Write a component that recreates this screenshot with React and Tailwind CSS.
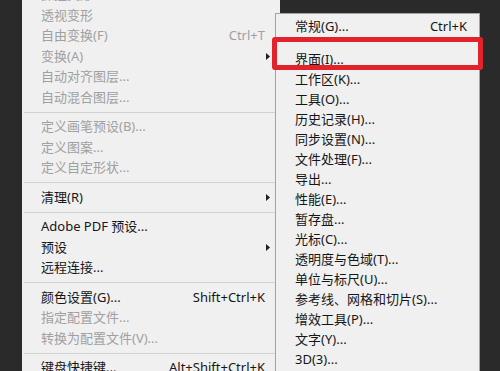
import React from 'react';

const FONT = { fontFamily: '"Noto Sans", "Noto Sans CJK SC", sans-serif' };

const editMenu = [
  { label: '操控变形', off: true },
  { label: '透视变形', off: true },
  { label: '自由变换(F)', off: true, key: 'Ctrl+T' },
  { label: '变换(A)', off: true, sub: true },
  { label: '自动对齐图层...', off: true },
  { label: '自动混合图层...', off: true },
  { sep: true },
  { label: '定义画笔预设(B)...', off: true },
  { label: '定义图案...', off: true },
  { label: '定义自定形状...', off: true },
  { sep: true },
  { label: '清理(R)', sub: true },
  { sep: true },
  { label: 'Adobe PDF 预设...' },
  { label: '预设', sub: true },
  { label: '远程连接...' },
  { sep: true },
  { label: '颜色设置(G)...', key: 'Shift+Ctrl+K' },
  { label: '指定配置文件...', off: true },
  { label: '转换为配置文件(V)...', off: true },
  { sep: true },
  { label: '键盘快捷键...', key: 'Alt+Shift+Ctrl+K' },
];

const prefsMenu = [
  '界面(I)...',
  '工作区(K)...',
  '工具(O)...',
  '历史记录(H)...',
  '同步设置(N)...',
  '文件处理(F)...',
  '导出...',
  '性能(E)...',
  '暂存盘...',
  '光标(C)...',
  '透明度与色域(T)...',
  '单位与标尺(U)...',
  '参考线、网格和切片(S)...',
  '增效工具(P)...',
  '文字(Y)...',
  '3D(3)...',
];

function Arrow() {
  return (
    <svg width="4" height="7" viewBox="0 0 4 7" className="ml-auto">
      <path d="M0 0 L4 3.5 L0 7 Z" fill="#1e1e1e" />
    </svg>
  );
}

export default function App() {
  return (
    <div className="relative w-[500px] h-[371px] overflow-hidden bg-[#2a2a2a] text-[13px]" style={FONT}>
      <div className="ml-[22px] mt-[-15.5px] w-[258px] bg-[#f0f0f0]">
        {editMenu.map((it, i) =>
          it.sep ? (
            <div key={i} className="h-[9px] flex items-center pl-[2px]">
              <div className="h-px w-full bg-[#d2d2d2]" />
            </div>
          ) : (
            <div
              key={i}
              className={`h-[20.5px] flex items-center pl-[19px] pr-[10px] leading-none ${it.off ? 'text-[#a0a0a0]' : 'text-[#161616]'}`}
            >
              <span>{it.label}</span>
              {it.key && <span className="ml-auto mr-[5px]">{it.key}</span>}
              {it.sub && <Arrow />}
            </div>
          )
        )}
      </div>

      <div className="absolute left-[275px] top-[13px] w-[205px] h-[370px] bg-[#f0f0f0] border border-[#a3a3a3] pt-[2px] text-[#161616]">
        <div className="h-[20px] flex items-center pl-[19px] pr-[12px] leading-none">
          <span>常规(G)...</span>
          <span className="ml-auto">Ctrl+K</span>
        </div>
        <div className="h-[13px]" />
        {prefsMenu.map((t, i) => (
          <div key={i} className="h-[20px] flex items-center pl-[19px] leading-none">
            {t}
          </div>
        ))}
      </div>

      <div className="absolute left-[272px] top-[37px] w-[211px] h-[33px] border-[5px] border-[#e3232c] rounded-[3px]" />
    </div>
  );
}
